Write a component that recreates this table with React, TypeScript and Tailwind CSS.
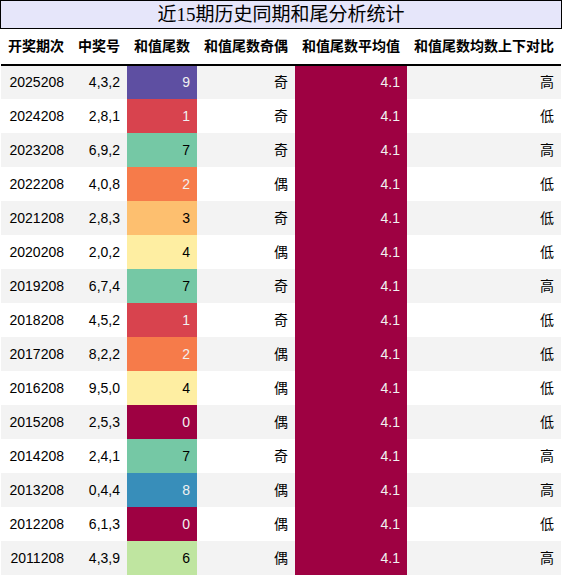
// Same-period tail-number stats table (pandas-styled look)
const rows: [string, string, number, string, string][] = [
  ['2025208', '4,3,2', 9, '奇', '高'],
  ['2024208', '2,8,1', 1, '奇', '低'],
  ['2023208', '6,9,2', 7, '奇', '高'],
  ['2022208', '4,0,8', 2, '偶', '低'],
  ['2021208', '2,8,3', 3, '奇', '低'],
  ['2020208', '2,0,2', 4, '偶', '低'],
  ['2019208', '6,7,4', 7, '奇', '高'],
  ['2018208', '4,5,2', 1, '奇', '低'],
  ['2017208', '8,2,2', 2, '偶', '低'],
  ['2016208', '9,5,0', 4, '偶', '低'],
  ['2015208', '2,5,3', 0, '偶', '低'],
  ['2014208', '2,4,1', 7, '奇', '高'],
  ['2013208', '0,4,4', 8, '偶', '高'],
  ['2012208', '6,1,3', 0, '偶', '低'],
  ['2011208', '4,3,9', 6, '偶', '高'],
];

// Spectral gradient, 0..9
const tailClass: Record<number, string> = {
  0: 'bg-[#9e0142] text-[#f1f1f1]',
  1: 'bg-[#d8434e] text-[#f1f1f1]',
  2: 'bg-[#f67b4a] text-[#f1f1f1]',
  3: 'bg-[#fdbf6f] text-black',
  4: 'bg-[#feeea2] text-black',
  6: 'bg-[#bfe5a0] text-black',
  7: 'bg-[#75c8a5] text-black',
  8: 'bg-[#388eba] text-[#f1f1f1]',
  9: 'bg-[#5e4fa2] text-[#f1f1f1]',
};

const headers = ['开奖期次', '中奖号', '和值尾数', '和值尾数奇偶', '和值尾数平均值', '和值尾数均数上下对比'];
const widths = ['w-[70px]', 'w-[56px]', 'w-[70px]', 'w-[98px]', 'w-[112px]', 'w-[154px]'];

export default function App() {
  return (
    <div
      className="w-[562px] bg-white text-[14px] text-black"
      style={{ fontFamily: '"Liberation Sans", "Noto Sans CJK SC", sans-serif' }}
    >
      {/* title bar */}
      <div
        className="h-[29px] border border-black bg-[#e6e6fa] flex items-center justify-center text-[19px] leading-none"
        style={{ fontFamily: '"Liberation Serif", "Noto Sans CJK SC", serif' }}
      >
        近15期历史同期和尾分析统计
      </div>

      <div className="px-[1px]">
        <table className="w-[560px] table-fixed border-collapse">
          <thead>
            <tr className="h-[36px] border-b-2 border-black">
              {headers.map((h, i) => (
                <th key={h} className={`${widths[i]} px-[7px] text-right font-bold whitespace-nowrap`}>
                  {h}
                </th>
              ))}
            </tr>
          </thead>
          <tbody>
            {rows.map(([period, nums, tail, odd, cmp], i) => (
              <tr key={period} className={`h-[34px] ${i % 2 === 0 ? 'bg-[#f3f3f3]' : 'bg-white'}`}>
                <td className="px-[7px] text-right">{period}</td>
                <td className="px-[7px] text-right">{nums}</td>
                <td className={`px-[7px] text-right ${tailClass[tail]}`}>{tail}</td>
                <td className="px-[7px] text-right">{odd}</td>
                <td className="px-[7px] text-right bg-[#9e0142] text-[#f1f1f1]">4.1</td>
                <td className="px-[7px] text-right">{cmp}</td>
              </tr>
            ))}
          </tbody>
        </table>
      </div>
    </div>
  );
}
